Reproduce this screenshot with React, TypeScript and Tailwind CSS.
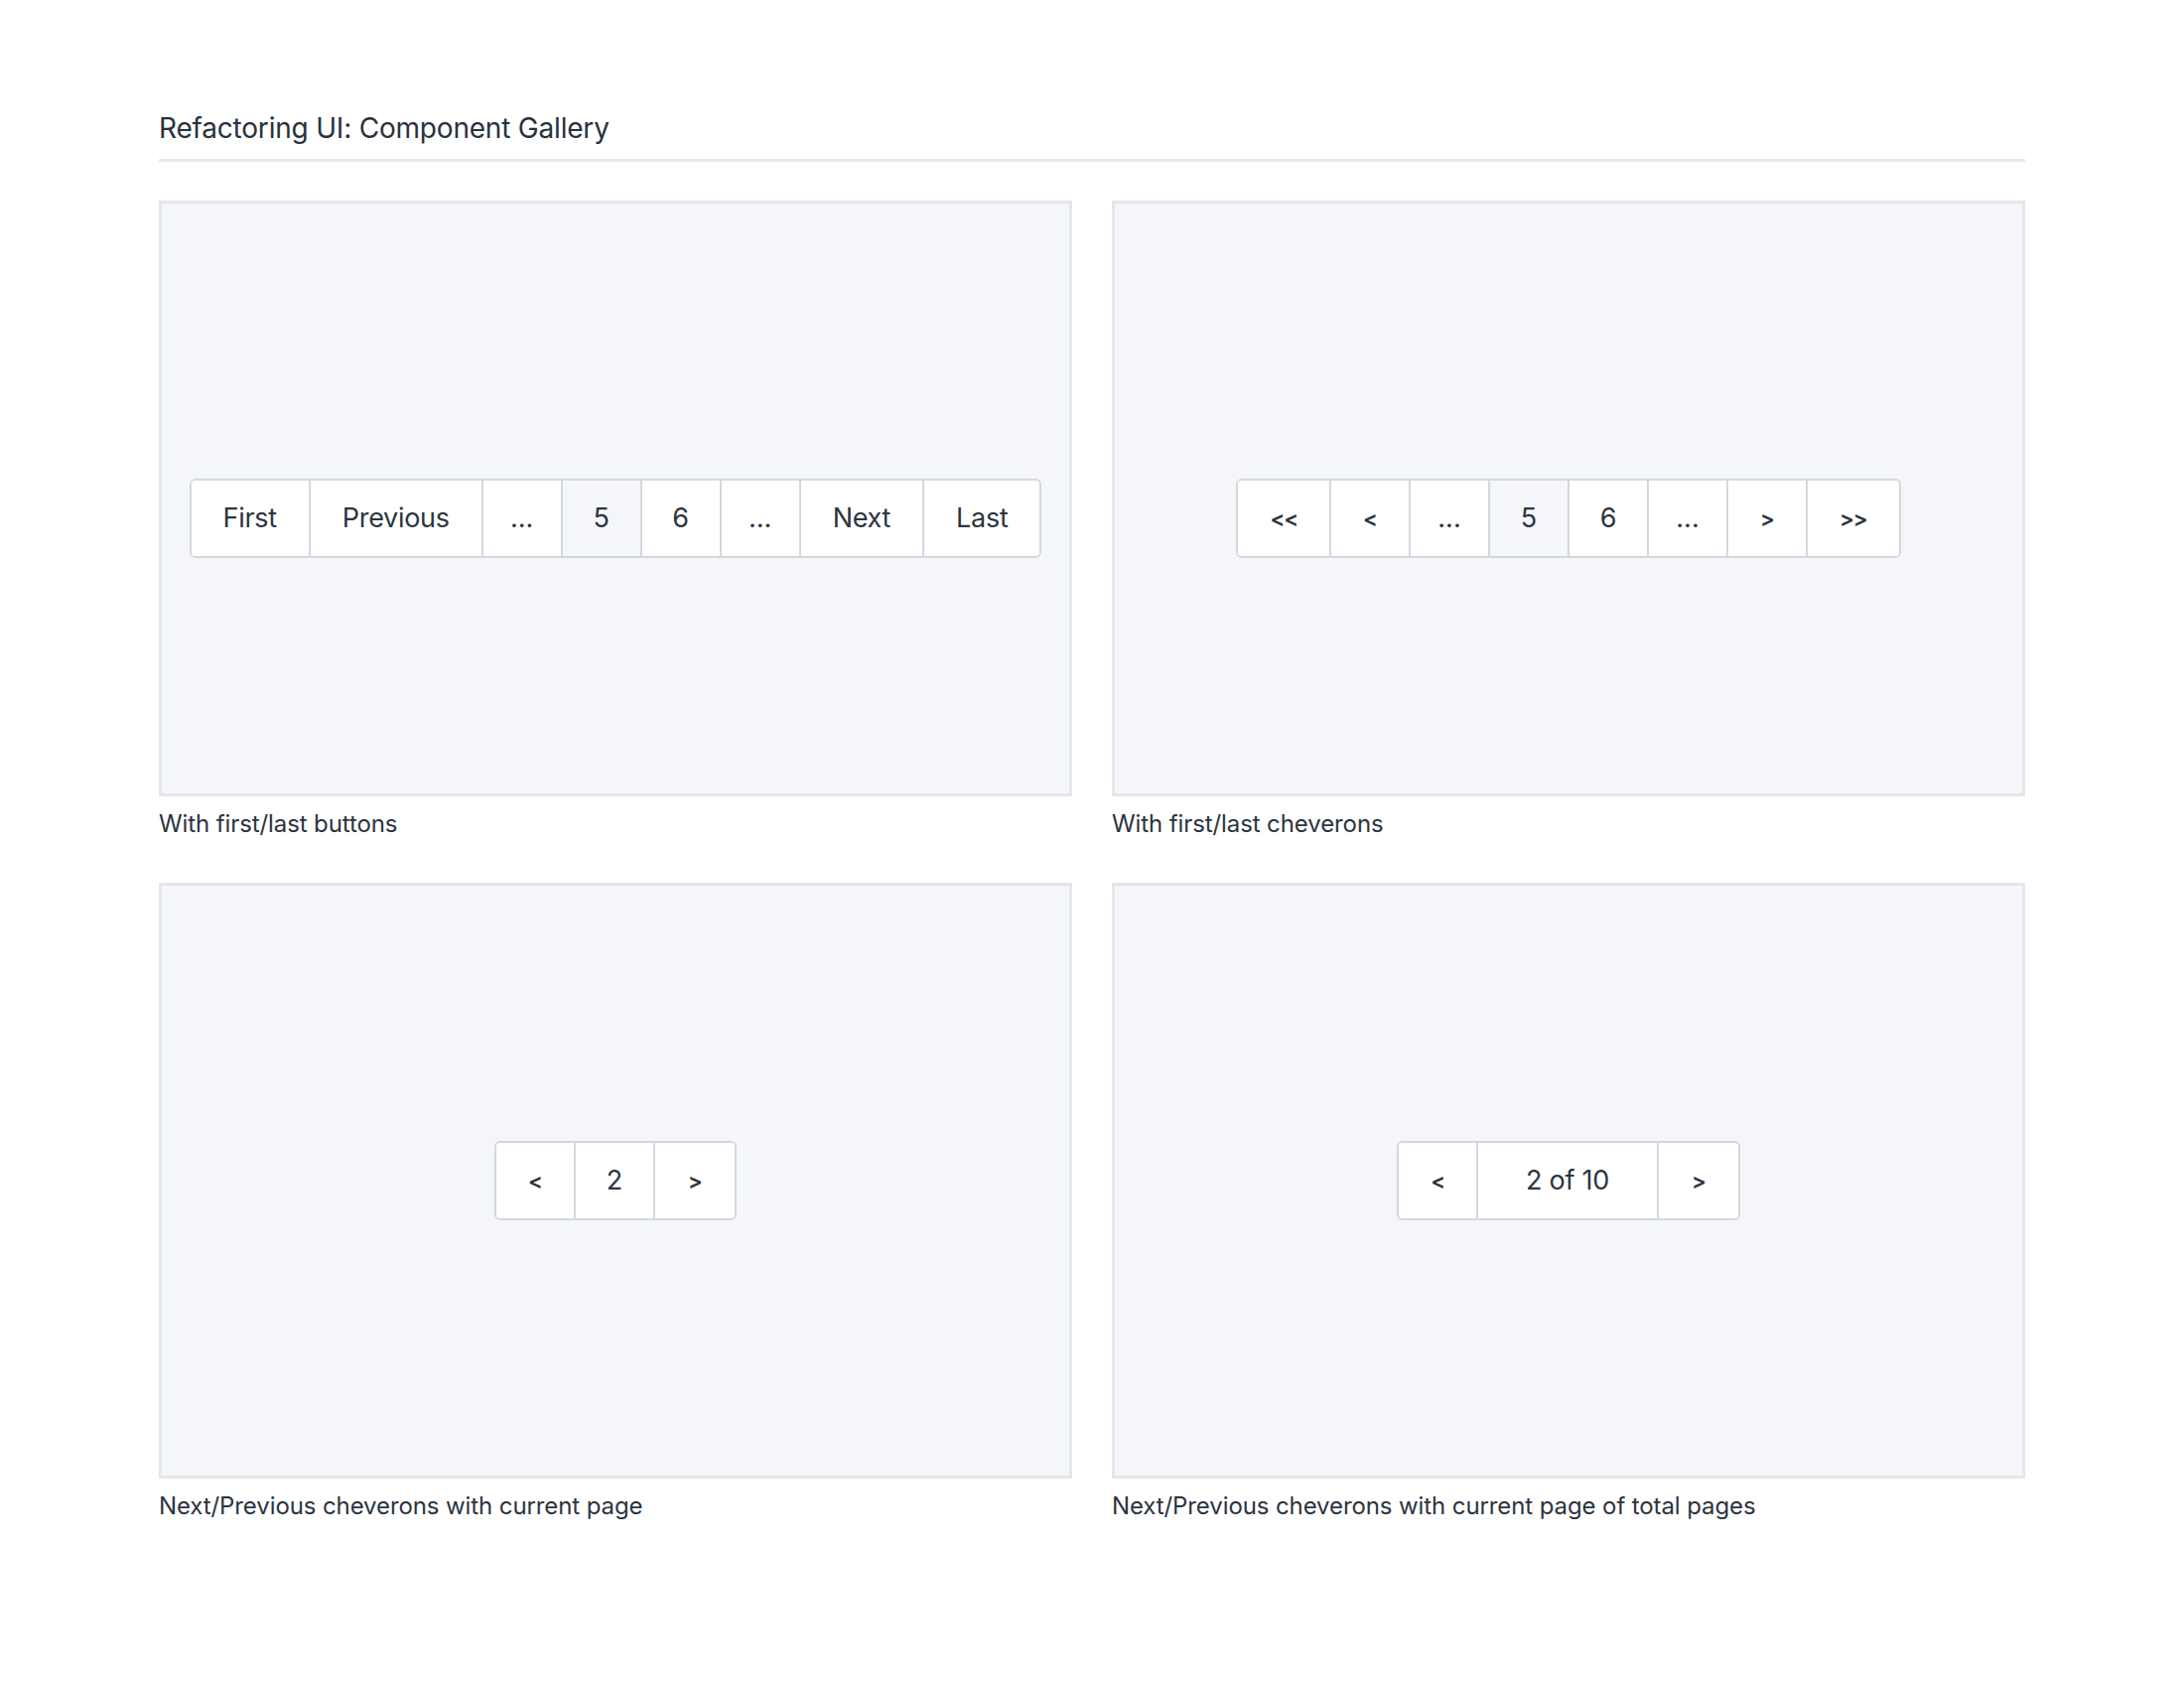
import React from "react";

const font = { fontFamily: "Inter, 'Noto Sans', sans-serif" };

type Item = { label: string; active?: boolean; kind?: "text" | "num" | "chev" | "wide" };

function Pager({ items }: { items: Item[] }) {
  return (
    <div className="flex rounded-md border-2 border-[#d3d8de] bg-white overflow-hidden divide-x-2 divide-[#d3d8de]">
      {items.map((it, i) => {
        const base = "h-[76px] flex items-center justify-center text-[#2b3541]";
        let cls = "";
        if (it.kind === "num") cls = "w-[80px] text-[27px]";
        else if (it.kind === "chev") cls = "px-8 min-w-[80px] text-[22px] font-semibold tracking-[-1px]";
        else if (it.kind === "wide") cls = "px-12 text-[27px] tracking-[-0.3px]";
        else cls = "px-8 text-[27px] tracking-[-0.3px]";
        return (
          <div key={i} className={`${base} ${cls} ${it.active ? "bg-[#f4f6fa]" : "bg-white"}`}>
            {it.label}
          </div>
        );
      })}
    </div>
  );
}

function Card({ caption, children, shift }: { caption: string; children: React.ReactNode; shift?: boolean }) {
  return (
    <div className="flex flex-col">
      <div
        className={`h-[600px] border-[3px] border-[#e3e6eb] bg-[#f5f6fa] flex items-center justify-center ${shift ? "pt-[40px]" : ""}`}
      >
        {children}
      </div>
      <div className="mt-3 text-[24px] leading-[32px] text-[#2b3440] tracking-[-0.1px]">{caption}</div>
    </div>
  );
}

export default function App() {
  return (
    <div className="min-h-[1700px] bg-white" style={font}>
      <div className="w-[1880px] mx-auto pt-[109px]">
        <div className="text-[28px] leading-[40px] text-[#28323d] tracking-[-0.2px]">Refactoring UI: Component Gallery</div>
        <div className="mt-[11px] h-[3px] bg-[#e7eaee]" />
        <div className="mt-[39px] grid grid-cols-2 gap-x-10 gap-y-[43px]">
          <Card caption="With first/last buttons" shift>
            <Pager
              items={[
                { label: "First" },
                { label: "Previous" },
                { label: "...", kind: "num" },
                { label: "5", kind: "num", active: true },
                { label: "6", kind: "num" },
                { label: "...", kind: "num" },
                { label: "Next" },
                { label: "Last" },
              ]}
            />
          </Card>
          <Card caption="With first/last cheverons" shift>
            <Pager
              items={[
                { label: "<<", kind: "chev" },
                { label: "<", kind: "chev" },
                { label: "...", kind: "num" },
                { label: "5", kind: "num", active: true },
                { label: "6", kind: "num" },
                { label: "...", kind: "num" },
                { label: ">", kind: "chev" },
                { label: ">>", kind: "chev" },
              ]}
            />
          </Card>
          <Card caption="Next/Previous cheverons with current page">
            <Pager
              items={[
                { label: "<", kind: "chev" },
                { label: "2", kind: "num" },
                { label: ">", kind: "chev" },
              ]}
            />
          </Card>
          <Card caption="Next/Previous cheverons with current page of total pages">
            <Pager
              items={[
                { label: "<", kind: "chev" },
                { label: "2 of 10", kind: "wide" },
                { label: ">", kind: "chev" },
              ]}
            />
          </Card>
        </div>
      </div>
    </div>
  );
}
